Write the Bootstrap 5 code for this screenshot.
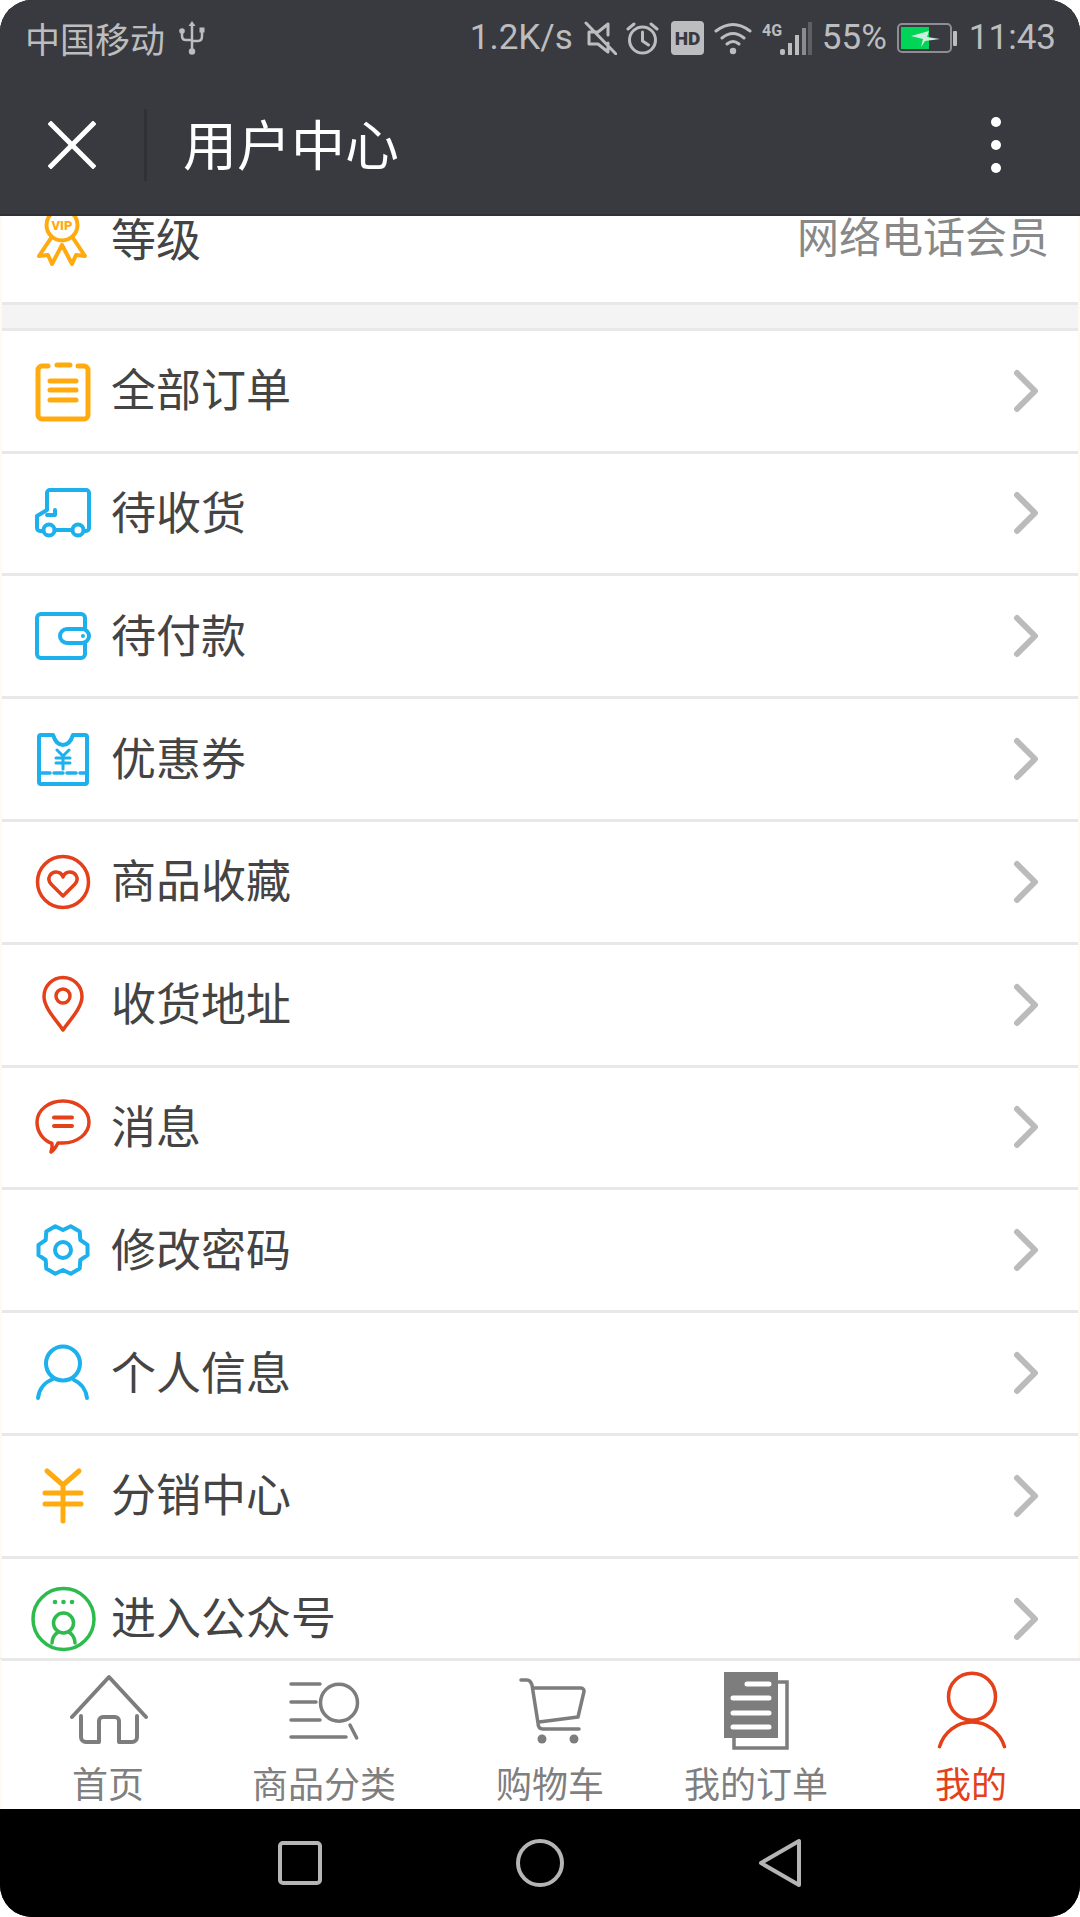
<!DOCTYPE html>
<html lang="zh-CN">
<head>
<meta charset="utf-8">
<title>用户中心</title>
<link rel="stylesheet" href="https://cdn.jsdelivr.net/npm/bootstrap@5.3.0/dist/css/bootstrap.min.css">
<style>
html,body{height:100%;background:#fff;margin:0}
body{font-family:"Noto Sans CJK SC","Noto Sans",sans-serif;overflow:hidden}
.phone{width:1080px;height:1917px;border-radius:32px;overflow:hidden;background:#000}
.top-head{height:216px;background:#383a40;flex:none;border-bottom:2px solid #2f3136}
.status-row{height:75px;padding:0 24px 0 25px;color:#bcbdbf;font-size:35px;line-height:1}
.status-row .num{font-family:Roboto,sans-serif;font-size:35px}
.status-row svg{display:block;flex:none}
.usb-ic{margin-left:14px}
.st-a{margin-left:11px}
.st-b{margin-left:9px}
.st-c{margin-left:12px}
.st-d{margin-left:10px}
.st-e{margin-left:8px;margin-right:-2px}
.head-bar{height:139px;padding:0;flex-wrap:nowrap}
.head-close{width:147px;padding-left:48px;border-right:3px solid #2f3136;height:72px;display:flex;align-items:center}
.head-title{font-size:54px;line-height:1;color:#fff;margin-left:36px;padding-bottom:4px}
.head-more{margin-right:79px}
.body-area{background:#fff;flex:1 1 0;min-height:0;overflow:hidden;border-left:2px solid #fefaf2;border-right:2px solid #fefaf2}
.shift-up{margin-top:-34px}
.list-group.menu-list{border-radius:0}
.list-group.menu-list>.list-group-item.menu-item{height:122.8px;padding:0 40px 0 31px;border-width:0 0 3px;border-style:solid;border-color:#e8e8e8;font-size:45px;line-height:1;color:#444;gap:18px;border-radius:0}
.menu-item svg{flex:none;overflow:visible}
.menu-item .arrow{margin-left:auto}
.menu-item .lbl{padding-bottom:6px}
.menu-item .lbl-top{padding-bottom:9px}
.menu-item .val{margin-left:auto;margin-right:-11px;color:#888;font-size:42px;padding-bottom:14px}
.menu-item .vip-ic{margin-bottom:8px}
.gap-band{height:26px;background:#f4f4f4;border-bottom:3px solid #e8e8e8}
.tab-strip{height:151px;flex:none;background:#fff;border-top:3px solid #e8e8e8;display:grid;grid-template-columns:180px 252px 200px 212px 218px;padding-left:16px;border-left:2px solid #fefaf2}
.tab-cell{display:flex;flex-direction:column;align-items:center;font-size:36px;line-height:1;color:#7f7f7f;padding-top:9px;gap:14px;text-decoration:none}
.tab-cell.on{color:#e4401a}
.soft-bar{height:108px;flex:none;background:#000;gap:194px}
.ic-o{fill:none;stroke:#ffab10;stroke-linecap:round;stroke-linejoin:round}
.ic-b{fill:none;stroke:#1cb0ec;stroke-linecap:round;stroke-linejoin:round}
.ic-r{fill:none;stroke:#e4401a;stroke-linecap:round;stroke-linejoin:round}
.ic-g{fill:none;stroke:#2dbb4e;stroke-linecap:round;stroke-linejoin:round}
.ic-t{fill:none;stroke:#7d7d7d;stroke-linecap:round;stroke-linejoin:round}
.ic-s{fill:none;stroke:#bcbdbf;stroke-linecap:round;stroke-linejoin:round}
</style>
</head>
<body>
<div class="phone d-flex flex-column">
  <header class="top-head">
    <div class="status-row d-flex align-items-center">
      <span>中国移动</span>
      <svg class="usb-ic" width="26" height="34" viewBox="0 0 26 34"><g class="ic-s" stroke-width="2.500"><path d="M13 4V31M3 12v3q0 4 4 4h6M23 10v5q0 5-4 5h-6"/></g><path d="M13 0l3.500 5h-7z" fill="#bcbdbf"/><circle cx="3" cy="10" r="2.800" fill="#bcbdbf"/><rect x="20.500" y="6.500" width="5" height="5" fill="#bcbdbf"/><circle cx="13" cy="30.500" r="3.200" fill="#bcbdbf"/></svg>
      <span class="num ms-auto">1.2K/s</span>
      <svg class="st-a" width="33" height="34" viewBox="0 0 33 34"><g class="ic-s" stroke-width="3"><path d="M24 3V14M24 22v9L14 23H5V11h9L24 3M2 2L32 33"/></g></svg>
      <svg class="st-b" width="33" height="34" viewBox="0 0 33 34"><g class="ic-s" stroke-width="3"><circle cx="16.500" cy="19" r="13"/><path d="M16.500 11v9l6 4M2 8L8 3M31 8L25 3"/></g></svg>
      <svg class="st-c" width="33" height="34" viewBox="0 0 33 34"><rect width="33" height="34" rx="4" fill="#bcbdbf"/><text x="16.500" y="24" text-anchor="middle" font-family="Roboto,sans-serif" font-weight="900" font-size="19" fill="#383a40">HD</text></svg>
      <svg class="st-d" width="38" height="34" viewBox="0 0 38 34"><g class="ic-s" stroke-width="3"><path d="M2 10Q19-3 36 10M8 17Q19 8 30 17M13 23Q19 18 25 23"/></g><circle cx="19" cy="30" r="3.200" fill="#bcbdbf"/></svg>
      <svg class="st-d" width="52" height="34" viewBox="0 0 52 34"><text x="0" y="15" font-family="Roboto,sans-serif" font-weight="700" font-size="16" fill="#bcbdbf">4G</text><rect x="18" y="28" width="5" height="6" rx="2" fill="#bcbdbf"/><rect x="26" y="22" width="4" height="12" fill="#bcbdbf"/><rect x="33" y="14" width="4" height="20" fill="#bcbdbf"/><rect x="46" y="1" width="4" height="33" fill="#5d5f64"/><rect x="40" y="7" width="4" height="27" fill="#8a8b8f"/></svg>
      <span class="num st-e">55%</span>
      <svg class="st-c" width="60" height="32" viewBox="0 0 60 32"><rect x="1" y="2" width="53" height="28" rx="4" fill="none" stroke="#8d8e91" stroke-width="2"/><rect x="4" y="5" width="28" height="22" fill="#00d558"/><rect x="56" y="9" width="4" height="15" rx="1" fill="#bcbdbf"/><path d="M14 14L32 9l-2 6 13 2-15 2-4 6 2-8z" fill="#cdeedc"/></svg>
      <span class="num st-c">11:43</span>
    </div>
    <nav class="navbar head-bar">
      <div class="head-close"><svg width="48" height="48" viewBox="0 0 48 48"><path d="M3 3L45 45M45 3L3 45" stroke="#fff" stroke-width="5" stroke-linecap="square" fill="none"/></svg></div>
      <span class="head-title me-auto">用户中心</span>
      <svg class="head-more" width="10" height="56" viewBox="0 0 10 56"><circle cx="5" cy="5" r="5" fill="#fff"/><circle cx="5" cy="28" r="5" fill="#fff"/><circle cx="5" cy="51" r="5" fill="#fff"/></svg>
    </nav>
  </header>

  <main class="body-area">
    <div class="list-group list-group-flush menu-list shift-up">
      <div class="list-group-item d-flex align-items-center menu-item">
        <svg class="vip-ic" width="60" height="60" viewBox="0 0 60 60"><g class="ic-o" stroke-width="4"><circle cx="29" cy="17" r="15.500"/><path d="M18 30L6 48l9-1 4 9 10-19 10 19 4-9 9 1-12-18"/></g><text x="29" y="22" text-anchor="middle" font-family="Roboto,sans-serif" font-weight="900" font-size="13" fill="#ffab10">VIP</text></svg>
        <span class="lbl-top">等级</span>
        <span class="val">网络电话会员</span>
      </div>
    </div>
    <div class="gap-band"></div>
    <div class="list-group list-group-flush menu-list">
      <a class="list-group-item d-flex align-items-center menu-item">
        <svg width="60" height="60" viewBox="0 0 60 60"><g class="ic-o" stroke-width="5"><path d="M15 5H9a4 4 0 0 0-4 4V54a4 4 0 0 0 4 4H51a4 4 0 0 0 4-4V9a4 4 0 0 0-4-4H45"/><path d="M24 4H37M17 20H43M17 29H43M17 39H43"/></g></svg>
        <span class="lbl">全部订单</span>
        <svg class="arrow" width="24" height="42" viewBox="0 0 24 42"><path d="M3 3L21 21L3 39" fill="none" stroke="#bbb" stroke-width="6" stroke-linecap="round" stroke-linejoin="round"/></svg>
      </a>
      <a class="list-group-item d-flex align-items-center menu-item">
        <svg width="60" height="60" viewBox="0 0 60 60"><g class="ic-b" stroke-width="4"><path d="M10 48H7a3 3 0 0 1-3-3V33l10-6V10a3 3 0 0 1 3-3h36a3 3 0 0 1 3 3v35a3 3 0 0 1-3 3h-2"/><circle cx="16" cy="47" r="5.500"/><circle cx="45" cy="47" r="5.500"/><path d="M22 47H39M22 27v5h-8"/></g></svg>
        <span class="lbl">待收货</span>
        <svg class="arrow" width="24" height="42" viewBox="0 0 24 42"><path d="M3 3L21 21L3 39" fill="none" stroke="#bbb" stroke-width="6" stroke-linecap="round" stroke-linejoin="round"/></svg>
      </a>
      <a class="list-group-item d-flex align-items-center menu-item">
        <svg width="60" height="60" viewBox="0 0 60 60"><g class="ic-b" stroke-width="4"><path d="M52 22V12a4 4 0 0 0-4-4H8a4 4 0 0 0-4 4v36a4 4 0 0 0 4 4h40a4 4 0 0 0 4-4V38"/><rect x="27" y="23" width="29" height="14" rx="7"/></g><circle cx="50" cy="30" r="2" fill="#1cb0ec"/></svg>
        <span class="lbl">待付款</span>
        <svg class="arrow" width="24" height="42" viewBox="0 0 24 42"><path d="M3 3L21 21L3 39" fill="none" stroke="#bbb" stroke-width="6" stroke-linecap="round" stroke-linejoin="round"/></svg>
      </a>
      <a class="list-group-item d-flex align-items-center menu-item">
        <svg width="60" height="60" viewBox="0 0 60 60"><g class="ic-b" stroke-width="4"><path d="M20 6H8a2 2 0 0 0-2 2V53a2 2 0 0 0 2 2H52a2 2 0 0 0 2-2V8a2 2 0 0 0-2-2H40C38 12 35 16 30 16S22 12 20 6Z"/><path d="M8 44H53" stroke-dasharray="9 4" stroke-width="3.500"/><path d="M24 21L30 27L36 21M23 29H37M23 34H37M30 27V40" stroke-width="3"/></g></svg>
        <span class="lbl">优惠券</span>
        <svg class="arrow" width="24" height="42" viewBox="0 0 24 42"><path d="M3 3L21 21L3 39" fill="none" stroke="#bbb" stroke-width="6" stroke-linecap="round" stroke-linejoin="round"/></svg>
      </a>
      <a class="list-group-item d-flex align-items-center menu-item">
        <svg width="60" height="60" viewBox="0 0 60 60"><g class="ic-r" stroke-width="3.500"><circle cx="30" cy="30" r="25.500"/><path d="M30 44L18 32C13 26 18 20 23 20C26 20 29 22 30 25C31 22 34 20 37 20C42 20 47 26 42 32Z"/></g></svg>
        <span class="lbl">商品收藏</span>
        <svg class="arrow" width="24" height="42" viewBox="0 0 24 42"><path d="M3 3L21 21L3 39" fill="none" stroke="#bbb" stroke-width="6" stroke-linecap="round" stroke-linejoin="round"/></svg>
      </a>
      <a class="list-group-item d-flex align-items-center menu-item">
        <svg width="60" height="60" viewBox="0 0 60 60"><g class="ic-r" stroke-width="3.500"><path d="M30 55C24 46 11 33 11 21.500A19 19 0 0 1 49 21.500C49 33 36 46 30 55Z"/><circle cx="30" cy="21" r="7"/></g></svg>
        <span class="lbl">收货地址</span>
        <svg class="arrow" width="24" height="42" viewBox="0 0 24 42"><path d="M3 3L21 21L3 39" fill="none" stroke="#bbb" stroke-width="6" stroke-linecap="round" stroke-linejoin="round"/></svg>
      </a>
      <a class="list-group-item d-flex align-items-center menu-item">
        <svg width="60" height="60" viewBox="0 0 60 60"><g class="ic-r" stroke-width="3.500"><path d="M18 55C19 52 19.500 49 19 46.500C10 43 4 35 4 25C4 13 16 4 30 4S56 13 56 25S44 46 30 46C28 46 26 46 25 46C23 50 21 53 18 55Z"/><path d="M21 20.500H39M21 29H39" stroke-width="4"/></g></svg>
        <span class="lbl">消息</span>
        <svg class="arrow" width="24" height="42" viewBox="0 0 24 42"><path d="M3 3L21 21L3 39" fill="none" stroke="#bbb" stroke-width="6" stroke-linecap="round" stroke-linejoin="round"/></svg>
      </a>
      <a class="list-group-item d-flex align-items-center menu-item">
        <svg width="60" height="60" viewBox="0 0 60 60"><g class="ic-b" stroke-width="4"><path d="M54.500 24.800V35.200L47.300 40L46.700 48.600L37.700 53.800L30 50L22.300 53.800L13.300 48.600L12.700 40L5.500 35.200V24.800L12.700 20L13.300 11.400L22.300 6.200L30 10L37.700 6.200L46.700 11.400L47.300 20Z"/><circle cx="30" cy="30" r="8"/></g></svg>
        <span class="lbl">修改密码</span>
        <svg class="arrow" width="24" height="42" viewBox="0 0 24 42"><path d="M3 3L21 21L3 39" fill="none" stroke="#bbb" stroke-width="6" stroke-linecap="round" stroke-linejoin="round"/></svg>
      </a>
      <a class="list-group-item d-flex align-items-center menu-item">
        <svg width="60" height="60" viewBox="0 0 60 60"><g class="ic-b" stroke-width="4"><circle cx="30" cy="20.500" r="17"/><path d="M5 55C6 46 12 39 20 36M41 37C48 40 53 47 54 55"/></g></svg>
        <span class="lbl">个人信息</span>
        <svg class="arrow" width="24" height="42" viewBox="0 0 24 42"><path d="M3 3L21 21L3 39" fill="none" stroke="#bbb" stroke-width="6" stroke-linecap="round" stroke-linejoin="round"/></svg>
      </a>
      <a class="list-group-item d-flex align-items-center menu-item">
        <svg width="60" height="60" viewBox="0 0 60 60"><g class="ic-o" stroke-width="5"><path d="M14 5L30 19L46 5M30 19V55M12 27H48M12 38H48"/></g></svg>
        <span class="lbl">分销中心</span>
        <svg class="arrow" width="24" height="42" viewBox="0 0 24 42"><path d="M3 3L21 21L3 39" fill="none" stroke="#bbb" stroke-width="6" stroke-linecap="round" stroke-linejoin="round"/></svg>
      </a>
      <a class="list-group-item d-flex align-items-center menu-item">
        <svg width="60" height="60" viewBox="0 0 60 60"><g class="ic-g" stroke-width="3.500"><circle cx="30.500" cy="30" r="30.500"/><circle cx="30.500" cy="34" r="10"/><path d="M19 54C19 49 21 46 25 43M36 43C40 46 42 49 42 54"/></g><circle cx="22" cy="13" r="2.300" fill="#2dbb4e"/><circle cx="30.500" cy="13" r="2.300" fill="#2dbb4e"/><circle cx="39" cy="13" r="2.300" fill="#2dbb4e"/></svg>
        <span class="lbl">进入公众号</span>
        <svg class="arrow" width="24" height="42" viewBox="0 0 24 42"><path d="M3 3L21 21L3 39" fill="none" stroke="#bbb" stroke-width="6" stroke-linecap="round" stroke-linejoin="round"/></svg>
      </a>
    </div>
  </main>

  <nav class="tab-strip">
    <a class="tab-cell"><svg width="80" height="80" viewBox="-1 0 80 80"><g class="ic-t" stroke-width="4"><path d="M3 47L40 7L77 47M12 46V67a5 5 0 0 0 5 5H30V51a4 4 0 0 1 4-4h12a4 4 0 0 1 4 4V72h13a5 5 0 0 0 5-5V46"/></g></svg><span>首页</span></a>
    <a class="tab-cell"><svg width="80" height="80" viewBox="-1 0 80 80"><g class="ic-t" stroke-width="3.500"><path d="M6 14H35M6 32H31M6 50H35M6 67H61M65 55L71.700 68"/><circle cx="54" cy="32.700" r="18.500"/></g></svg><span>商品分类</span></a>
    <a class="tab-cell"><svg width="80" height="80" viewBox="-3 0 80 80"><g class="ic-t" stroke-width="3.500"><path d="M8 10h6c3 0 4 2 5 5l6 38c0 4 2 6 5 6H66M20 18H68a3 3 0 0 1 3 3.500L65 47L26 52"/></g><circle cx="29" cy="69" r="4.500" fill="#7d7d7d"/><circle cx="61" cy="69" r="4.500" fill="#7d7d7d"/></svg><span>购物车</span></a>
    <a class="tab-cell"><svg width="80" height="80" viewBox="0 0 80 80"><path d="M62 12h9V78H18V68" fill="none" stroke="#7d7d7d" stroke-width="3.500"/><rect x="8" y="2" width="54" height="66" fill="#7d7d7d"/><path d="M31 14H53M17 28H53M17 43H53M17 57H53" stroke="#fff" stroke-width="5" stroke-linecap="round"/></svg><span>我的订单</span></a>
    <a class="tab-cell on"><svg width="80" height="80" viewBox="-1 0 80 80"><g class="ic-r" stroke-width="3.500"><circle cx="40" cy="26.700" r="23.500"/><path d="M7.500 76.700C12 62 25 52 40 52S68 62 72.500 76.700"/></g></svg><span>我的</span></a>
  </nav>

  <div class="soft-bar d-flex align-items-center justify-content-center">
    <svg width="44" height="44" viewBox="0 0 44 44"><rect x="2" y="2" width="40" height="40" rx="3" fill="none" stroke="#b5b5b5" stroke-width="4"/></svg>
    <svg width="48" height="48" viewBox="0 0 48 48"><circle cx="24" cy="24" r="22" fill="none" stroke="#b5b5b5" stroke-width="4"/></svg>
    <svg width="44" height="50" viewBox="0 0 44 50"><path d="M3 25L41 3V47Z" fill="none" stroke="#b5b5b5" stroke-width="4" stroke-linejoin="round"/></svg>
  </div>
</div>
<script src="https://cdn.jsdelivr.net/npm/bootstrap@5.3.0/dist/js/bootstrap.bundle.min.js"></script>
</body>
</html>
